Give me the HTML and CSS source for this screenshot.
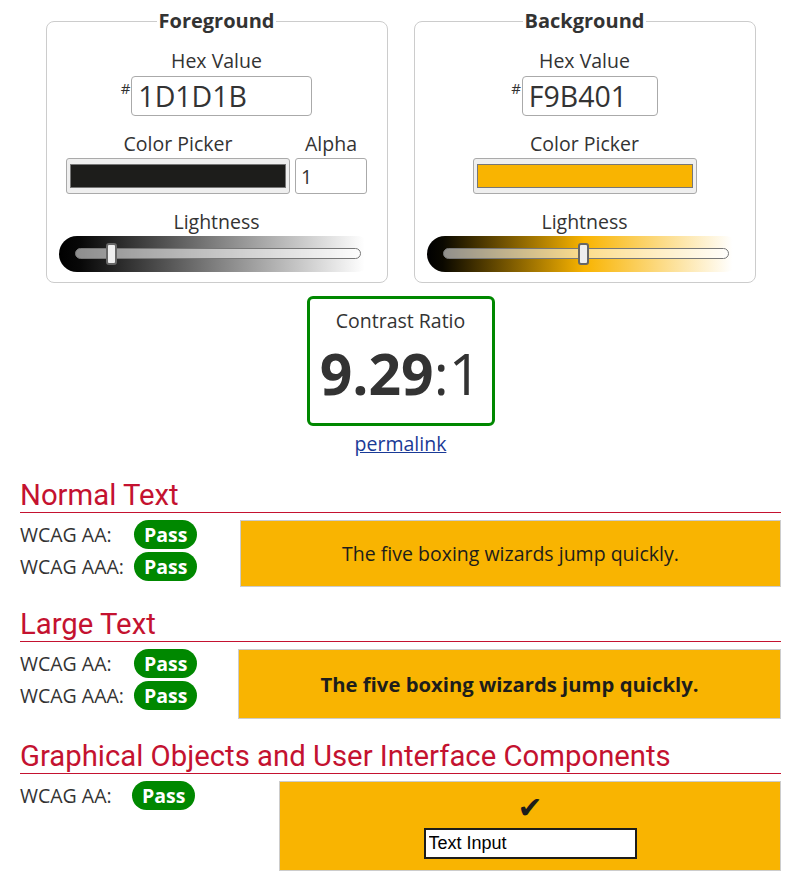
FILE: index.html
```html
<!DOCTYPE html>
<html lang="en">
<head>
<meta charset="utf-8">
<title>Contrast Checker</title>
<link rel="stylesheet" href="styles.css">
</head>
<body>
<main class="page">
  <div class="pickers">
    <fieldset class="panel">
      <legend>Foreground</legend>
      <div class="field">
        <label class="lbl" for="fg-hex">Hex Value</label>
        <div class="hex-row"><span class="hash">#</span><input id="fg-hex" class="hex hex-fg" type="text" value="1D1D1B"></div>
      </div>
      <div class="picker-row">
        <div class="field">
          <span class="lbl">Color Picker</span>
          <div class="swatch"><span class="swatch-fill fill-fg"></span></div>
        </div>
        <div class="field">
          <label class="lbl" for="fg-alpha">Alpha</label>
          <input id="fg-alpha" class="alpha" type="text" value="1">
        </div>
      </div>
      <div class="field">
        <span class="lbl">Lightness</span>
        <div class="slider slider-fg"><div class="track"><span class="thumb" style="left:30px"></span></div></div>
      </div>
    </fieldset>
    <fieldset class="panel">
      <legend>Background</legend>
      <div class="field">
        <label class="lbl" for="bg-hex">Hex Value</label>
        <div class="hex-row"><span class="hash">#</span><input id="bg-hex" class="hex hex-bg" type="text" value="F9B401"></div>
      </div>
      <div class="field">
        <span class="lbl">Color Picker</span>
        <div class="swatch"><span class="swatch-fill fill-bg"></span></div>
      </div>
      <div class="field">
        <span class="lbl">Lightness</span>
        <div class="slider slider-bg"><div class="track"><span class="thumb" style="left:134px"></span></div></div>
      </div>
    </fieldset>
  </div>

  <div class="ratio-box">
    <div class="ratio-title">Contrast Ratio</div>
    <div class="ratio"><b>9.29</b>:1</div>
  </div>
  <a class="permalink" href="#">permalink</a>

  <section class="section">
    <h2>Normal Text</h2>
    <div class="result">
      <div class="checks checks-normal">
        <div class="check"><span class="check-label">WCAG AA:</span><span class="badge">Pass</span></div>
        <div class="check"><span class="check-label">WCAG AAA:</span><span class="badge">Pass</span></div>
      </div>
      <div class="sample sample-normal">The five boxing wizards jump quickly.</div>
    </div>
  </section>

  <section class="section">
    <h2>Large Text</h2>
    <div class="result">
      <div class="checks checks-large">
        <div class="check"><span class="check-label">WCAG AA:</span><span class="badge">Pass</span></div>
        <div class="check"><span class="check-label">WCAG AAA:</span><span class="badge">Pass</span></div>
      </div>
      <div class="sample sample-large">The five boxing wizards jump quickly.</div>
    </div>
  </section>

  <section class="section">
    <h2>Graphical Objects and User Interface Components</h2>
    <div class="result">
      <div class="checks checks-ui">
        <div class="check"><span class="check-label label-ui">WCAG AA:</span><span class="badge">Pass</span></div>
      </div>
      <div class="sample sample-ui">
        <span class="checkmark">&#10004;</span>
        <input class="demo-input" type="text" value="Text Input">
      </div>
    </div>
  </section>
</main>
</body>
</html>
```

FILE: styles.css
```css
* { box-sizing: border-box; }

body {
  margin: 0;
  background: #fff;
  color: #333;
  font-family: "Open Sans", "DejaVu Sans", sans-serif;
  font-size: 19.5px;
  line-height: 24px;
}

.page {
  padding: 9px 13px 0 20px;
}

/* ---------- pickers ---------- */
.pickers {
  display: flex;
  justify-content: center;
  gap: 26px;
}

.panel {
  width: 342px;
  min-width: 0;
  margin: 0;
  border: 1px solid #ccc;
  border-radius: 8px;
  padding: 16px 0 10px;
  display: flex;
  flex-direction: column;
  align-items: center;
  gap: 16px;
}

.panel legend {
  margin: 0 auto;
  padding: 0 2px;
  font-weight: 700;
  font-size: 20px;
  line-height: 24px;
}

.field {
  display: flex;
  flex-direction: column;
  align-items: center;
}

.lbl {
  display: block;
  line-height: 24px;
}

.hex-row {
  display: flex;
  align-items: flex-start;
  margin-top: 3px;
}

.hash {
  font-size: 15px;
  line-height: 15px;
  margin-top: 5px;
  margin-right: 1px;
}

.hex {
  height: 40px;
  border: 1px solid #aaa;
  border-radius: 4px;
  font-family: "Open Sans", sans-serif;
  font-size: 28.5px;
  color: #333;
  padding: 0 6px;
  background: #fff;
}

.hex-fg { width: 181px; }
.hex-bg { width: 136px; }

.picker-row {
  display: flex;
  gap: 5px;
}

.swatch {
  margin-top: 2px;
  width: 224px;
  height: 36px;
  border: 1px solid #aaa;
  border-radius: 3px;
  background: #efefef;
  padding: 5px 3px;
}

.swatch-fill {
  display: block;
  height: 100%;
  border: 1px solid #777;
}

.fill-fg { background: #1d1d1b; }
.fill-bg { background: #f9b401; }

.alpha {
  margin-top: 2px;
  width: 72px;
  height: 36px;
  border: 1px solid #aaa;
  border-radius: 3px;
  font-family: "Open Sans", sans-serif;
  font-size: 19.5px;
  color: #333;
  padding: 0 5px;
  background: #fff;
}

.slider {
  margin-top: 2px;
  width: 315px;
  height: 36px;
  border-radius: 18px;
  padding: 12px 13px 0 16px;
}

.slider-fg {
  background: linear-gradient(to right, #000 0%, #080808 7%, #808080 50%, #fff 97%);
}

.slider-bg {
  background: linear-gradient(to right, #000 0%, #0a0800 5%, #f9b401 50%, #fff 97%);
}

.track {
  position: relative;
  height: 11px;
  border: 1px solid #777;
  border-radius: 6px;
  background: rgba(255, 255, 255, 0.55);
}

.thumb {
  position: absolute;
  top: -6px;
  width: 11px;
  height: 22px;
  border: 2px solid #666;
  border-radius: 3px;
  background: #eee;
}

/* ---------- ratio ---------- */
.ratio-box {
  width: 188px;
  height: 130px;
  margin: 13px auto 0;
  border: 3px solid #080;
  border-radius: 6px;
  padding-top: 10px;
  text-align: center;
}

.ratio-title {
  line-height: 24px;
}

.ratio {
  margin-top: 8px;
  font-size: 57px;
  line-height: 64px;
  font-weight: 400;
}

.ratio b { font-weight: 700; }

.permalink {
  display: block;
  width: max-content;
  margin: 6px auto 0;
  color: #1a3a96;
  text-decoration: underline;
}

/* ---------- results ---------- */
.section h2 {
  margin: 20px 0 0;
  font-family: Roboto, "Liberation Sans", sans-serif;
  font-weight: 400;
  font-size: 29.3px;
  line-height: 34px;
  color: #c41230;
  border-bottom: 1px solid #c41230;
}

.section:first-of-type h2 { margin-top: 22px; }

.result {
  display: flex;
  margin-top: 7px;
}

.checks {
  flex: none;
  display: flex;
  flex-direction: column;
  gap: 3px;
}

.checks-normal { width: 220px; }
.checks-large { width: 218px; }
.checks-ui { width: 259px; }

.check {
  display: flex;
  align-items: center;
  height: 29px;
}

.check-label { width: 114px; }
.label-ui { width: 112px; }

.badge {
  height: 29px;
  line-height: 29px;
  padding: 0 10px;
  border-radius: 15px;
  background: #080;
  color: #fff;
  font-weight: 700;
}

.sample {
  flex: 1;
  background: #f9b401;
  border: 1px solid #ccc;
  color: #1d1d1b;
  display: flex;
  align-items: center;
  justify-content: center;
}

.sample-normal { height: 67px; }

.sample-large {
  height: 70px;
  font-weight: 700;
  font-size: 20.3px;
}

.sample-ui {
  height: 90px;
  flex-direction: column;
  justify-content: flex-start;
  padding-top: 10px;
  gap: 4px;
}

.checkmark {
  font-family: "DejaVu Sans", sans-serif;
  font-size: 30px;
  line-height: 32px;
  color: #1d1d1b;
}

.demo-input {
  width: 213px;
  height: 31px;
  border: 2px solid #1d1d1b;
  background: #fff;
  font-family: "Liberation Sans", Arial, sans-serif;
  font-size: 18px;
  color: #000;
  padding: 0 3px;
}
```
